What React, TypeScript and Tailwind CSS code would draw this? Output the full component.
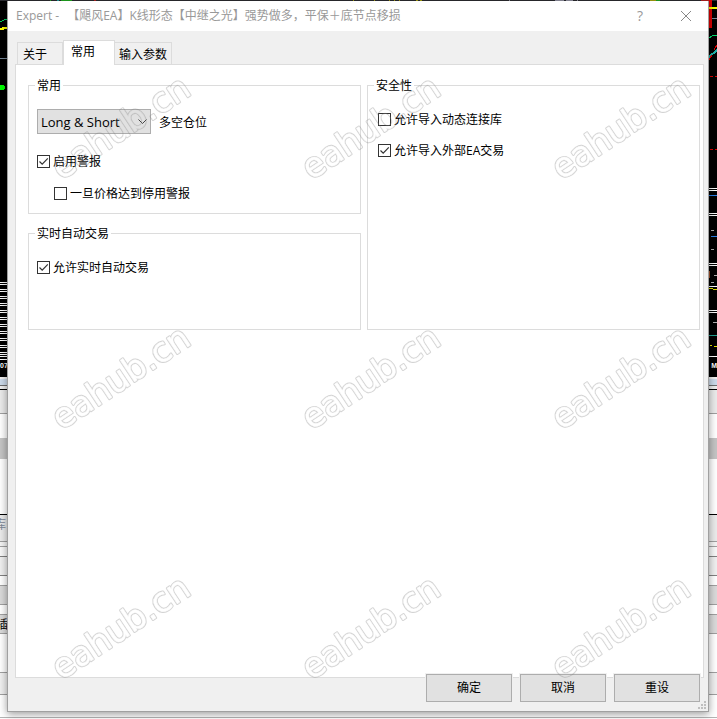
import { useState } from 'react';
import type { ReactNode } from 'react';
import { clsx } from 'clsx';

const TABS = ['关于', '常用', '输入参数'];

// Horizontal bands of the terminal window below the chart, top to bottom
const BANDS = [
  'h-[2px] bg-[#f0f0f0]',
  'h-[6px] bg-[#ccdaea]',
  'h-px bg-[#6d6d6d]',
  'h-[4px] border-b border-black bg-[#eeeeee]',
  'h-[24px] border-b border-[#a0a0a0] bg-[#ebebeb]',
  'h-[24px] bg-white',
  'h-[21px] bg-[#c4c4c4]',
  'h-[56px] border-b border-black bg-white',
  'h-[27px] border-b border-[#a0a0a0] bg-[#ebebeb]',
  'h-[5px] border-b border-[#a0a0a0] bg-[#f4f4f4]',
  'h-[10px] border-b border-[#808080] bg-[#f8f8f8]',
  'h-[19px] border-b border-[#808080] bg-[#f0f0f0]',
  'h-[10px] border-b border-[#a0a0a0] bg-white',
  'h-[19px] border-b border-[#a0a0a0] bg-[#dadada]',
  'h-[10px] border-b border-[#a0a0a0] bg-white',
  'h-[19px] border-b border-[#a0a0a0] bg-[#dadada]',
  'h-[39px] border-b border-[#a0a0a0] bg-white',
  'h-[22px] border-b border-[#a0a0a0] bg-[#f0f0f0]',
  'h-[23px] border-b border-[#b4b4b4] bg-white',
];

function Backdrop() {
  return (
    <div aria-hidden="true" className="absolute inset-0 overflow-hidden bg-white">
      <div className="relative h-[377px] overflow-hidden bg-black">
        <svg width="100%" height="1" className="block bg-[#2b2b30]" shapeRendering="crispEdges">
          <path d="M50 .5h1M61 .5h11M656 .5h4" stroke="#20a820" />
          <path d="M57 .5h2" stroke="#20a0a0" />
          <path d="M94 .5h2M701 .5h8" stroke="#b02020" />
          <path d="M353 .5h1M374 .5h1M389 .5h1M394 .5h1M399 .5h1M416 .5h2M420 .5h2M650 .5h6" stroke="#a8a010" />
          <path d="M509 .5h1M555 .5h9M566 .5h7M577 .5h1" stroke="#9090a0" />
        </svg>
        <svg width="8" height="377" className="absolute top-0 left-0" shapeRendering="crispEdges">
          <path d="M0 22L4 20L8 19" stroke="#00d060" fill="none" />
          <path d="M0 29h3v-1h5" stroke="#ffff00" strokeWidth="2" fill="none" />
          <path d="M0 58.5h8" stroke="#778899" />
          <path d="M0 85h4v1h1v3h-1v1h-4z" fill="#00ff00" />
          <path
            d="M0 282.5h8M0 284.5h8M0 289.5h8M0 291.5h8M0 296.5h8M0 298.5h8M0 303.5h8M0 305.5h8M0 310.5h8M0 312.5h8M0 317.5h8M0 319.5h8M0 324.5h8M0 326.5h8M0 331.5h8M0 333.5h8M0 338.5h8M0 340.5h8M0 345.5h8M0 347.5h8M0 352.5h8M0 354.5h8M0 356.5h8M0 359.5h8"
            stroke="#ffffff"
          />
        </svg>
        <svg width="8" height="377" className="absolute top-0 right-0" shapeRendering="crispEdges">
          <rect x="0" y="0" width="3" height="28" fill="#e00000" />
          <path d="M0 8h8" stroke="#ffff00" strokeWidth="2" />
          <path d="M3 18.5h5" stroke="#778899" />
          <path d="M0 38L3 36L8 35" stroke="#00e070" fill="none" />
          <path d="M0 57L8 50" stroke="#20b2aa" strokeWidth="2" />
          <path d="M0 60L3 55M5 50L8 45" stroke="#e00000" />
          <path d="M1 76.5h3M6 76.5h2M1 149.5h3M6 149.5h2" stroke="#e00000" />
          <path
            d="M0 188.5h8M0 190.5h8M0 213.5h8M0 215.5h8M0 263.5h8M0 265.5h8M0 286.5h8M0 310.5h8M0 312.5h8M0 356.5h8"
            stroke="#ffffff"
          />
          <path d="M0 195.5h8M2 236.5h6" stroke="#2a7fe8" />
          <path d="M2 230.5h3M2 249.5h3M5 275.5h3M2 282.5h3M4 322.5h4" stroke="#b0b0b0" />
          <path d="M0 288.5h4M4 289.5h4M1 345.5h2M5 346.5h3" stroke="#e6e600" />
          <path d="M0 335.5h8" stroke="#20a090" />
          <path d="M0.5 271v7" stroke="#a0522d" />
        </svg>
        <span className="absolute top-[360px] left-0 font-['Liberation_Sans',sans-serif] text-[7px] leading-3 font-bold text-white">
          07
        </span>
        <span className="absolute top-[360px] right-0 font-['Liberation_Sans',sans-serif] text-[7px] leading-3 font-bold text-white">
          M
        </span>
      </div>
      {BANDS.map((band, i) => (
        <div key={i} className={band} />
      ))}
      <span className="absolute top-[517px] -left-[6px] text-xs leading-4 text-[#7f8896]">库</span>
      <span className="absolute top-[617px] -left-[4px] text-xs leading-4 text-black">插</span>
    </div>
  );
}

// Tiled site mark: rounded letter outlines, cut out of a translucent fill
function Watermark() {
  return (
    <svg aria-hidden="true" className="pointer-events-none absolute inset-0 z-20 h-full w-full">
      <defs>
        <pattern id="mark" width="250" height="250" patternUnits="userSpaceOnUse">
          <g
            transform="translate(127 137) rotate(-33.5)"
            textAnchor="middle"
            strokeLinejoin="round"
            className="font-['DejaVu_Sans',sans-serif] text-[34px]"
          >
            <text fill="white" stroke="white" strokeWidth="2.4">
              eahub.cn
            </text>
            <text aria-hidden="true" fill="black" stroke="black" strokeWidth="0.5">
              eahub.cn
            </text>
          </g>
        </pattern>
        <mask id="outline">
          <rect width="100%" height="100%" fill="url(#mark)" />
        </mask>
      </defs>
      <rect width="100%" height="100%" fill="#808080" fillOpacity="0.34" mask="url(#outline)" />
    </svg>
  );
}

interface CheckProps {
  label: string;
  defaultChecked?: boolean;
  className?: string;
}

function Check({ label, defaultChecked, className }: CheckProps) {
  return (
    <label className={clsx('flex h-4 w-fit items-center gap-[3px]', className)}>
      <span className="grid">
        <input
          type="checkbox"
          defaultChecked={defaultChecked}
          className="peer col-start-1 row-start-1 h-[13px] w-[13px] appearance-none border border-[#333333] bg-white"
        />
        <svg
          viewBox="0 0 13 13"
          className="pointer-events-none invisible col-start-1 row-start-1 h-[13px] w-[13px] peer-checked:visible"
        >
          <path d="M2.5 6.5L5.2 9.2L10.8 3.4" fill="none" stroke="#333333" strokeWidth="1.2" />
        </svg>
      </span>
      <span className="pt-0.5">{label}</span>
    </label>
  );
}

function Group({ title, className, children }: { title: string; className?: string; children: ReactNode }) {
  return (
    <fieldset className={clsx('min-w-0 border border-[#dcdcdc] px-1.5', className)}>
      <legend className="h-4 px-0.5 leading-[18px]">{title}</legend>
      {children}
    </fieldset>
  );
}

function DialogButton({ children }: { children: ReactNode }) {
  return (
    <button
      type="button"
      className="h-7 w-[86px] border border-[#adadad] bg-[#e1e1e1] outline-1 outline-[#f0f0f0] hover:border-[#0078d7] hover:bg-[#e5f1fb]"
    >
      {children}
    </button>
  );
}

export default function App() {
  const [tab, setTab] = useState('常用');

  return (
    <div className="relative flex min-h-screen flex-col font-['Open_Sans','Noto_Sans_CJK_SC',sans-serif] text-xs leading-4 text-black">
      <Backdrop />
      <Watermark />

      <div
        role="dialog"
        aria-labelledby="dialog-title"
        className="relative z-10 mt-px mr-2 mb-[7px] ml-[7px] flex flex-1 flex-col border border-t-0 border-[#a0a0a0] bg-[#f0f0f0] shadow-[0_2px_8px_rgba(0,0,0,0.4)]"
      >
        {/* Title bar */}
        <header className="flex h-[30px] items-center bg-white pr-4 pl-2 text-[#999999]">
          <h1 id="dialog-title" className="flex flex-1 gap-2 whitespace-nowrap">
            <span>Expert -</span>
            <span>【飓风EA】K线形态【中继之光】强势做多，平保＋底节点移损</span>
          </h1>
          <button type="button" aria-label="Help" className="mr-[34px] w-3 text-sm">
            ?
          </button>
          <button type="button" aria-label="Close">
            <svg width="12" height="12" viewBox="0 0 12 12">
              <path d="M1 1L11 11M11 1L1 11" stroke="#888888" />
            </svg>
          </button>
        </header>

        {/* Tabs */}
        <div role="tablist" className="mt-[9px] flex items-end pl-[9px]">
          {TABS.map((name) => (
            <button
              key={name}
              type="button"
              role="tab"
              aria-selected={tab === name}
              onClick={() => setTab(name)}
              className={clsx(
                'border border-b-0 border-[#dcdcdc] text-left',
                tab === name
                  ? 'relative z-10 -mb-px h-[25px] bg-white pr-[19px] pb-0.5 pl-[7px]'
                  : 'h-[22px] bg-[#f0f0f0] pt-0.5',
                name === '关于' && 'w-[46px] pl-[5px]',
                name === '输入参数' && '-ml-px px-1',
              )}
            >
              {name}
            </button>
          ))}
        </div>

        {/* Page */}
        <main className="mr-1 ml-[7px] flex-1 border border-[#dcdcdc] bg-white pt-3 pr-[3px] pl-3">
          <div className="grid grid-cols-2 gap-[6px]">
            <div>
              <Group title="常用" className="pb-3">
                <div className="flex items-center gap-2 pt-4 pl-0.5">
                  <div className="grid items-center">
                    <select
                      id="positions"
                      defaultValue="Long & Short"
                      className="col-start-1 row-start-1 h-[25px] w-[114px] appearance-none border border-[#adadad] bg-[#e1e1e1] pl-[3px] text-[13px]"
                    >
                      <option>Long &amp; Short</option>
                      <option>Only Long</option>
                      <option>Only Short</option>
                    </select>
                    <svg
                      width="9"
                      height="6"
                      viewBox="0 0 9 6"
                      className="pointer-events-none col-start-1 row-start-1 mr-1 justify-self-end"
                    >
                      <path d="M0.5 0.5L4.5 4.5L8.5 0.5" fill="none" stroke="#444444" />
                    </svg>
                  </div>
                  <label htmlFor="positions" className="pt-0.5">
                    多空仓位
                  </label>
                </div>
                <Check label="启用警报" defaultChecked className="mt-[19px] ml-0.5" />
                <Check label="一旦价格达到停用警报" className="mt-4 ml-[19px]" />
              </Group>

              <Group title="实时自动交易" className="mt-[11px] pb-[54px]">
                <Check label="允许实时自动交易" defaultChecked className="mt-[18px] ml-0.5" />
              </Group>
            </div>

            <Group title="安全性">
              <Check label="允许导入动态连接库" className="mt-[18px] ml-1" />
              <Check label="允许导入外部EA交易" defaultChecked className="mt-[15px] ml-1" />
            </Group>
          </div>
        </main>

        {/* Actions */}
        <footer className="relative -mt-1 flex justify-end gap-2 pr-2 pb-[9px]">
          <DialogButton>确定</DialogButton>
          <DialogButton>取消</DialogButton>
          <DialogButton>重设</DialogButton>
        </footer>

        <svg
          aria-hidden="true"
          width="8"
          height="8"
          className="absolute right-[2px] bottom-[2px]"
          fill="#bfbfbf"
          shapeRendering="crispEdges"
        >
          <path d="M6 0h2v2h-2zM3 3h2v2h-2zM6 3h2v2h-2zM0 6h2v2h-2zM3 6h2v2h-2zM6 6h2v2h-2z" />
        </svg>
      </div>
    </div>
  );
}
